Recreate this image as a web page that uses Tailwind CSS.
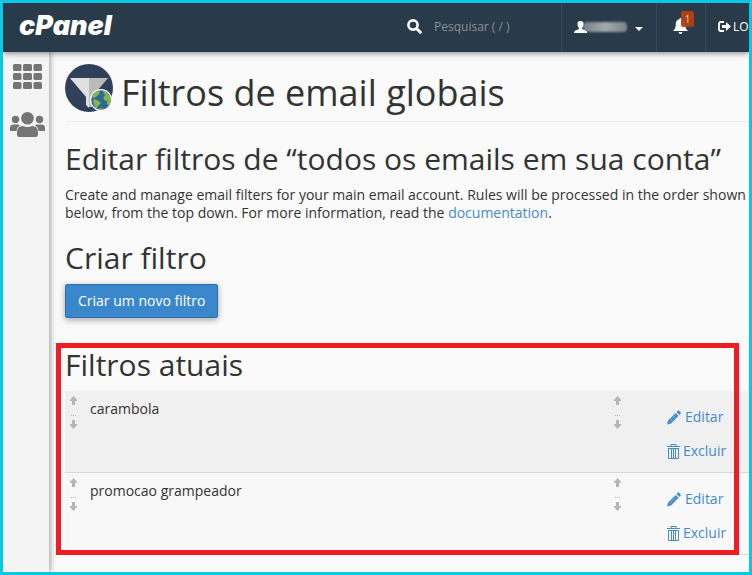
<!DOCTYPE html>
<html lang="pt-BR">
<head>
  <meta charset="UTF-8">
  <meta name="viewport" content="width=device-width, initial-scale=1.0">
  <title>cPanel - Filtros de email globais</title>
  <script src="https://cdn.jsdelivr.net/npm/@tailwindcss/browser@4"></script>
</head>
<body class="bg-[#fafafa] text-[#333] text-sm font-['Open_Sans',sans-serif]">
  <!-- Shared icons -->
  <svg class="hidden">
    <symbol id="sort-arrows" viewBox="0 0 9 33">
      <path fill="#b5b5b5" d="M4.500 0 8 4v1H6v4H3V5H1V4zM2 19h1v1H2zM4 19h1v1H4zM6 19h1v1H6zM3 24h3v4h2v1l-3.500 4L1 29v-1h2z"/>
    </symbol>
    <symbol id="pencil" viewBox="0 0 15 15">
      <path fill="#428bca" d="M0 15l1.200-4.300L9.300 2.600 12.400 5.700 4.300 13.800zM10.200 1.700 11.500.4q.7-.6 1.400 0l1.700 1.700q.6.700 0 1.400l-1.300 1.300z"/>
      <path stroke="#fff" stroke-opacity=".5" stroke-width=".7" d="M3 11.500 9.500 5"/>
    </symbol>
    <symbol id="trash" viewBox="0 0 13 15">
      <path fill="none" stroke="#428bca" d="M0 2.500h13M4 2V.5h5V2M1.500 4v10.500h10V4M1 4.500h11M4.500 5v9M6.500 5v9M8.500 5v9"/>
    </symbol>
  </svg>

  <div class="min-h-screen border-3 border-[#0bc8e2] flex flex-col overflow-hidden">
    <!-- Top bar -->
    <header class="relative z-10 h-[49px] bg-[#293a4a] text-white text-xs flex items-stretch shadow-[0_1px_6px_rgba(0,0,0,0.5)]">
      <a href="#" class="flex items-center pl-4 pb-1 text-[27px] leading-6 font-black italic font-['Inter',sans-serif]">cPanel</a>
      <div class="ml-auto flex shrink-0 -mr-7">
        <label class="flex items-center w-[154px] pb-0.5">
          <svg class="w-[15px] h-[15px] mr-3 shrink-0" viewBox="0 0 15 15" fill="none" stroke="#fff"><circle cx="6" cy="6" r="4.600" stroke-width="2.600"/><path stroke-width="3" stroke-linecap="round" d="M10 10l3.300 3.300"/></svg>
          <input type="text" aria-label="Pesquisar" placeholder="Pesquisar ( / )" class="w-full bg-transparent outline-none placeholder:text-[#8c8f92]">
        </label>
        <button type="button" aria-label="Conta" class="w-[95px] border-l border-[#35485a] flex items-center pl-3 pb-0.5">
          <svg class="w-[13px] h-3 z-10" viewBox="0 0 13 12" fill="#fff"><path d="M6.500 0C9 0 9.800 1.500 9.500 4 9.300 5.500 8.500 6.500 8 7v1l4 1.800q1 .7 1 2.200H0q0-1.500 1-2.200L5 8V7C4.500 6.500 3.700 5.500 3.500 4 3.200 1.500 4 0 6.500 0z"/></svg>
          <span class="w-11 h-2.5 -ml-1 rounded-sm bg-linear-to-r from-[#74808b] via-[#a5a9ad] to-[#7b838c] blur-[1px]"></span>
          <svg class="w-2 h-1 ml-2 mt-1" viewBox="0 0 8 4" fill="#fff"><path d="M0 0h8L4 4z"/></svg>
        </button>
        <button type="button" aria-label="Notificações" class="relative w-[49px] border-l border-[#35485a] flex items-center pl-4 pb-1">
          <svg class="w-[15px] h-4" viewBox="0 0 15 16" fill="#fff"><path d="M7.500 0q1 0 1 1.200C11.500 1.800 12.200 4 12.300 7c.1 3 1 4.500 2.700 6H0c1.700-1.500 2.600-3 2.700-6C2.800 4 3.500 1.800 6.500 1.200 6.500.4 6.800 0 7.500 0zM5.500 14h4q-.3 2-2 2t-2-2z"/></svg>
          <span class="absolute left-6 top-2 w-[13px] h-4 rounded-xs bg-[#b3400f]/95 text-[#d8d8d8] text-[10px] leading-4 text-center">1</span>
        </button>
        <a href="#" class="w-[72px] border-l border-[#35485a] flex items-center pl-3 pb-0.5 gap-0.5">
          <svg class="w-[13px] h-[11px] shrink-0" viewBox="0 0 13 11"><path fill="none" stroke="#fff" stroke-width="1.800" d="M6 1H3Q1 1 1 3v5q0 2 2 2h3"/><path fill="#fff" d="M4 4h4V1l5 4.500L8 10V7H4z"/></svg>
          LOGOUT
        </a>
      </div>
    </header>

    <div class="flex flex-1">
      <!-- Side navigation -->
      <nav class="w-[46px] shrink-0 bg-[#f4f4f4] shadow-[1px_0_6px_rgba(0,0,0,0.4)] flex flex-col items-center pt-3 gap-[23px]">
        <a href="#" aria-label="Início" class="ml-0.5">
          <svg class="w-[29px] h-[25px]" viewBox="0 0 29 25" fill="#757575">
            <rect width="8.500" height="7" rx="1.500"/><rect x="10" width="9" height="7" rx="1.500"/><rect x="20.500" width="8.500" height="7" rx="1.500"/>
            <rect y="9" width="8.500" height="7" rx="1.500"/><rect x="10" y="9" width="9" height="7" rx="1.500"/><rect x="20.500" y="9" width="8.500" height="7" rx="1.500"/>
            <rect y="18" width="8.500" height="7" rx="1.500"/><rect x="10" y="18" width="9" height="7" rx="1.500"/><rect x="20.500" y="18" width="8.500" height="7" rx="1.500"/>
          </svg>
        </a>
        <a href="#" aria-label="Usuários" class="ml-0.5">
          <svg class="w-[35px] h-[25px]" viewBox="0 0 35 25" fill="#757575">
            <circle cx="5.500" cy="7.500" r="3.700"/><circle cx="29.500" cy="7.500" r="3.700"/><circle cx="17.500" cy="6.300" r="6.300"/>
            <path d="M0 19v-3q0-3.500 3.500-3.500h4q1.500 0 2.500.8-3 1.700-3.500 5.700zM35 19v-3q0-3.500-3.500-3.500h-4q-1.500 0-2.500.8 3 1.700 3.500 5.700zM7 22.500V20q0-6 6-6 2 1 4.500 1T22 14q6 0 6 6v2.500Q28 25 25.500 25h-16Q7 25 7 22.500z"/>
          </svg>
        </a>
      </nav>

      <main class="flex-1 min-w-0 pl-4 pt-3">
        <div class="flex h-[58px] border-b border-[#eee]">
          <svg class="w-12 h-12 shrink-0" viewBox="0 0 48 48">
            <circle cx="24" cy="24" r="24" fill="#30405b"/>
            <path fill="#e0e0e0" d="M5 14h19v30l-3-3V33z"/>
            <path fill="#bababa" d="M24 14h19L27 33v10h-3z"/>
            <circle cx="36" cy="36" r="11" fill="#fff"/>
            <circle cx="36" cy="36" r="9.800" fill="#336699"/>
            <path fill="#82b74b" d="M27 32q2-4 6-5.500l2 1-1 2.500-3 3-3 1zM29 35l4 1.500 3 2.500-3 3-1 2.500-2-1-1-4-1-2zM38 26.500l5 2.500 2.800 5v4L44 42l-2-2v-3l-3-1-.5-3 2-2-1.500-1zM33 45l3-1 3 1-3 .8z"/>
          </svg>
          <h1 class="pl-2 pt-2 text-4xl leading-[42px] whitespace-nowrap">Filtros de email globais</h1>
        </div>

        <h2 class="mt-5 mb-[11px] text-3xl leading-[33px] whitespace-nowrap">Editar filtros de “todos os emails em sua conta”</h2>
        <p class="leading-[18px]">Create and manage email filters for your main email account. Rules will be processed in the order shown below, from the top down. For more information, read the <a href="#" class="text-[#428bca]">documentation</a>.</p>

        <h2 class="mt-[19px] mb-2.5 text-3xl leading-[33px]">Criar filtro</h2>
        <button type="button" class="block h-[34px] px-3 rounded-xs border border-[#2b6fb0] bg-[#3a87cc] text-white shadow-[0_2px_6px_rgba(0,0,0,0.35)]">Criar um novo filtro</button>

        <!-- Current filters -->
        <section class="relative mt-[30px] mb-4">
          <div class="absolute -left-[9px] right-2.5 -top-[5px] bottom-0 border-5 border-[#ee1c25] pointer-events-none"></div>
          <h2 class="mb-2.5 text-3xl leading-[33px]">Filtros atuais</h2>
          <table class="w-full table-fixed border-separate border-spacing-0">
            <colgroup>
              <col class="w-[25px]">
              <col>
              <col class="w-[54px]">
              <col class="w-[82px]">
            </colgroup>
            <tbody>
              <tr class="h-[82px] align-top bg-[#f0f0f0] *:border-b *:border-[#d8d8d8]">
                <td class="pt-[5px] pl-1"><svg class="w-[9px] h-[33px]"><use href="#sort-arrows"/></svg></td>
                <td class="pt-2 leading-5">carambola</td>
                <td class="pt-[5px]"><svg class="w-[9px] h-[33px]"><use href="#sort-arrows"/></svg></td>
                <td class="pt-[9px] leading-5 text-[#428bca]">
                  <a href="#" class="flex items-center gap-1 py-[7px]"><svg class="w-[14px] h-[15px]"><use href="#pencil"/></svg>Editar</a>
                  <a href="#" class="flex items-center gap-[3px] py-[7px]"><svg class="w-[13px] h-[15px]"><use href="#trash"/></svg>Excluir</a>
                </td>
              </tr>
              <tr class="h-[82px] align-top bg-[#f8f8f8] *:border-b *:border-[#d8d8d8]">
                <td class="pt-[5px] pl-1"><svg class="w-[9px] h-[33px]"><use href="#sort-arrows"/></svg></td>
                <td class="pt-2 leading-5">promocao grampeador</td>
                <td class="pt-[5px]"><svg class="w-[9px] h-[33px]"><use href="#sort-arrows"/></svg></td>
                <td class="pt-[9px] leading-5 text-[#428bca]">
                  <a href="#" class="flex items-center gap-1 py-[7px]"><svg class="w-[14px] h-[15px]"><use href="#pencil"/></svg>Editar</a>
                  <a href="#" class="flex items-center gap-[3px] py-[7px]"><svg class="w-[13px] h-[15px]"><use href="#trash"/></svg>Excluir</a>
                </td>
              </tr>
            </tbody>
          </table>
        </section>
      </main>
    </div>
  </div>
</body>
</html>
